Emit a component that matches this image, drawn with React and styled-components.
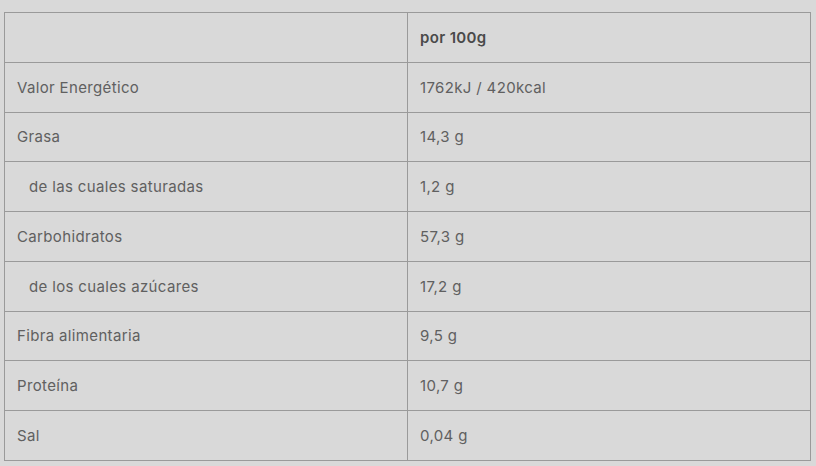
import React from "react";
import styled, { createGlobalStyle } from "styled-components";

const GlobalStyle = createGlobalStyle`
  html, body {
    margin: 0;
    padding: 0;
    background: #d9d9d9;
  }
`;

const Page = styled.div`
  padding: 12px 6px 0 4px;
  font-family: Inter, "Liberation Sans", sans-serif;
`;

const Table = styled.table`
  width: 807px;
  border-collapse: collapse;
  table-layout: fixed;
  font-size: 15px;
  letter-spacing: 0.35px;
`;

const Cell = styled.td`
  border: 1px solid #9a9a9a;
  height: 48.78px;
  padding: 0 12px 0 ${(props) => (props.$indent ? "24px" : "12px")};
  vertical-align: middle;
  font-weight: ${(props) => (props.$bold ? 600 : 400)};
  color: ${(props) => (props.$bold ? "#4a4a4a" : "#606060")};
`;

const rows = [
  ["Valor Energético", "1762kJ / 420kcal"],
  ["Grasa", "14,3 g"],
  ["de las cuales saturadas", "1,2 g", true],
  ["Carbohidratos", "57,3 g"],
  ["de los cuales azúcares", "17,2 g", true],
  ["Fibra alimentaria", "9,5 g"],
  ["Proteína", "10,7 g"],
  ["Sal", "0,04 g"],
];

const App = () => {
  return (
    <Page>
      <GlobalStyle />
      <Table>
        <tbody>
          <tr>
            <Cell />
            <Cell $bold>por 100g</Cell>
          </tr>
          {rows.map(([label, value, indent]) => (
            <tr key={label}>
              <Cell $indent={indent}>{label}</Cell>
              <Cell>{value}</Cell>
            </tr>
          ))}
        </tbody>
      </Table>
    </Page>
  );
};

export default App;
